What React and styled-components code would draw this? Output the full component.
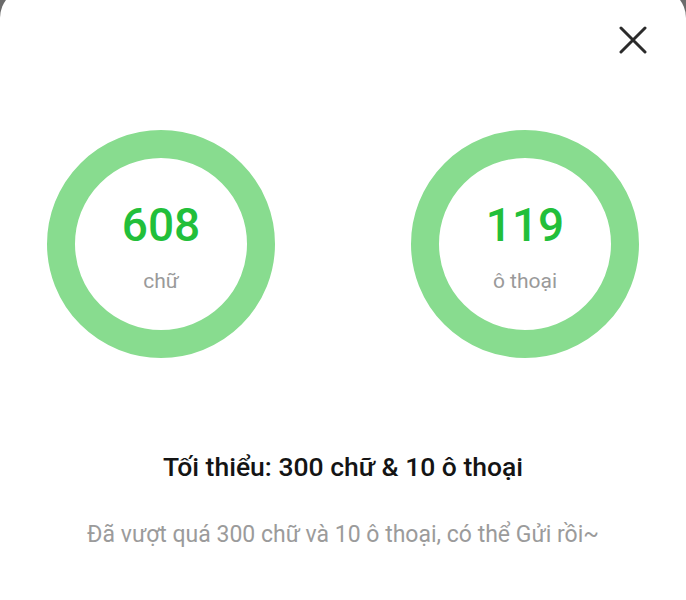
import styled, { createGlobalStyle } from "styled-components";

const GlobalStyle = createGlobalStyle`
  html, body {
    margin: 0;
    padding: 0;
    background: #6b6b6b;
    font-family: Roboto, "Noto Sans", "Liberation Sans", sans-serif;
  }
`;

const stats = [
  { value: 608, label: "chữ" },
  { value: 119, label: "ô thoại" },
];

const App = () => {
  return (
    <>
      <GlobalStyle />
      <Sheet>
        <TopBar>
          <CloseButton aria-label="Đóng">
            <svg width="28" height="28" viewBox="0 0 28 28">
              <path
                d="M2 2 L26 26 M26 2 L2 26"
                stroke="#2b2b2b"
                strokeWidth="3"
                strokeLinecap="round"
              />
            </svg>
          </CloseButton>
        </TopBar>
        <Rings>
          {stats.map((s) => (
            <Ring key={s.label}>
              <Value>{s.value}</Value>
              <Label>{s.label}</Label>
            </Ring>
          ))}
        </Rings>
        <Title>Tối thiểu: 300 chữ &amp; 10 ô thoại</Title>
        <Note>Đã vượt quá 300 chữ và 10 ô thoại, có thể Gửi rồi~</Note>
      </Sheet>
    </>
  );
};

export default App;

const Sheet = styled.div`
  background: #fff;
  height: 612px;
  margin-top: -12px;
  border-radius: 30px 30px 0 0;
  overflow: hidden;
  display: flex;
  flex-direction: column;
  align-items: center;
`;

const TopBar = styled.div`
  align-self: stretch;
  display: flex;
  justify-content: flex-end;
  padding: 38px 39px 0 0;
`;

const CloseButton = styled.button`
  border: none;
  background: none;
  padding: 0;
  width: 28px;
  height: 28px;
  cursor: pointer;
  display: flex;
`;

const Rings = styled.div`
  display: flex;
  gap: 136px;
  margin-top: 76px;
`;

const Ring = styled.div`
  width: 228px;
  height: 228px;
  box-sizing: border-box;
  border: 28px solid #88dc8f;
  border-radius: 50%;
  display: flex;
  flex-direction: column;
  align-items: center;
  justify-content: center;
  gap: 18px;
  padding-top: 6px;
`;

const Value = styled.div`
  font-size: 46px;
  font-weight: 500;
  line-height: 1.1;
  color: #22bf3a;
`;

const Label = styled.div`
  font-size: 21px;
  line-height: 1.2;
  color: #9a9a9a;
`;

const Title = styled.div`
  margin-top: 93px;
  font-size: 26.5px;
  font-weight: 500;
  color: #141414;
`;

const Note = styled.div`
  margin-top: 39px;
  font-size: 23px;
  color: #9b9b9b;
`;
